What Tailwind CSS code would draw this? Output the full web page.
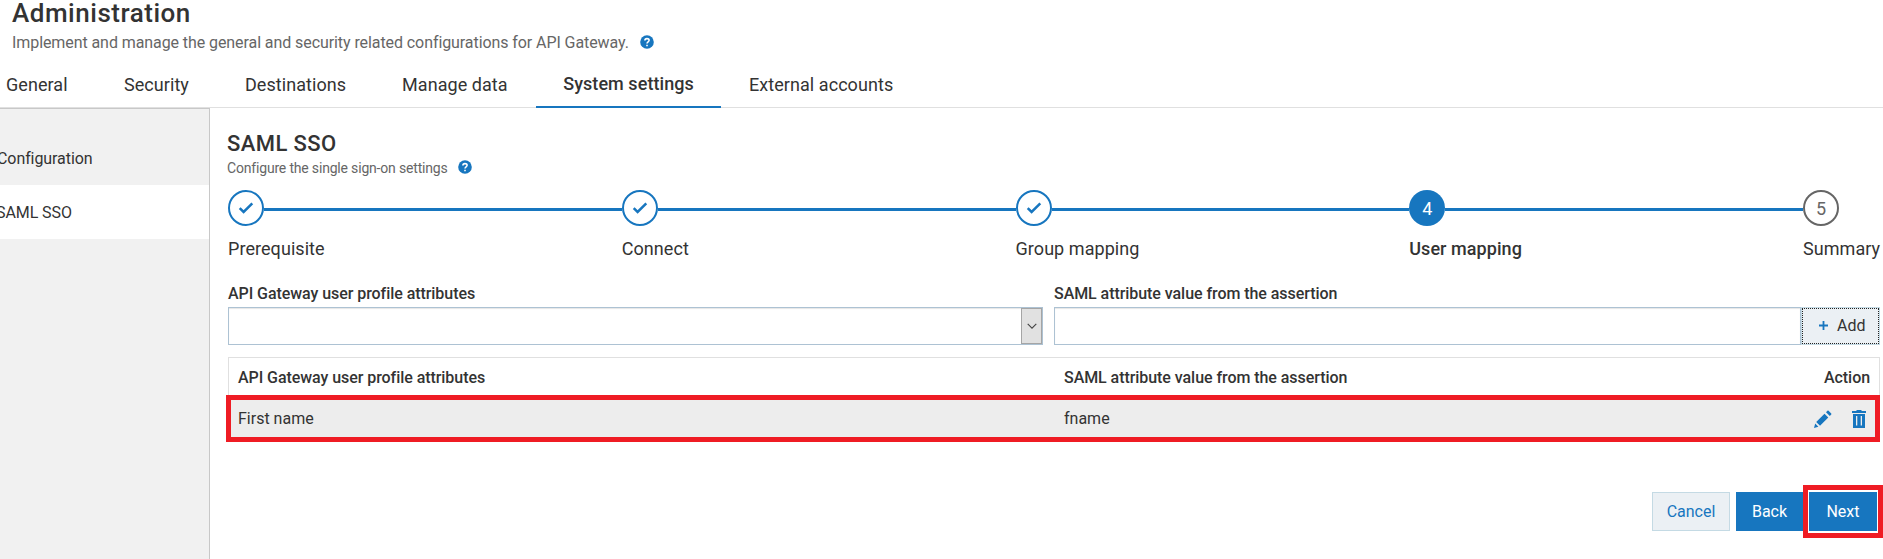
<!DOCTYPE html>
<html lang="en">
<head>
<meta charset="utf-8">
<title>Administration</title>
<script src="https://cdn.jsdelivr.net/npm/@tailwindcss/browser@4"></script>
</head>
<body class="w-[1883px] h-[559px] overflow-hidden bg-white font-['Roboto',sans-serif] text-[#333] text-base whitespace-nowrap flex flex-col">
<header class="h-[59px] shrink-0 pl-3">
  <h1 class="h-[26px] leading-[26px] text-[26px] tracking-[0.52px] font-medium">Administration</h1>
  <div class="flex items-center h-[33px] text-[#666]">
    <p class="tracking-[-0.08px]">Implement and manage the general and security related configurations for API Gateway.</p>
    <svg class="ml-[11px] -mt-[2px] size-[14px]" viewBox="0 0 14 14"><circle cx="7" cy="7" r="6.8" fill="#1776bf"/><path d="M4.9 5.4C4.9 3 9.1 3 9.1 5.3 9.1 6.8 7 6.8 7 8.5M7 9.7v1.6" fill="none" stroke="#fff" stroke-width="1.6"/></svg>
  </div>
</header>
<nav class="h-[49px] shrink-0 flex border-b border-[#e0e0e0] text-lg tracking-[0.06px] pl-[6px]">
  <a class="w-[118px] pt-1 flex items-center">General</a>
  <a class="w-[121px] pt-1 flex items-center">Security</a>
  <a class="w-[157px] pt-1 flex items-center">Destinations</a>
  <a class="w-[134px] pt-1 flex items-center">Manage data</a>
  <a class="w-[185px] h-[49px] pt-[3px] flex items-center justify-center font-medium border-b-2 border-[#1776bf]">System settings</a>
  <a class="pl-[28px] pt-1 flex items-center">External accounts</a>
</nav>
<div class="flex flex-1 min-h-0">
  <aside class="w-[210px] shrink-0 bg-[#f1f1f1] border-t border-r border-[#c8c8c8] pt-[22px] tracking-[-0.08px]">
    <a class="h-[54px] pt-px flex items-center"><span class="-ml-[3px]">Configuration</span></a>
    <a class="h-[54px] pt-px flex items-center bg-white"><span class="-ml-[4px]">SAML SSO</span></a>
  </aside>
  <main class="flex-1 min-w-0 pl-[18px] pt-[22px] flex flex-col">
    <h2 class="text-[22px] leading-[27px] tracking-[0.42px] font-medium -ml-px">SAML SSO</h2>
    <div class="flex items-center h-[22px] text-sm text-[#666] -ml-px">
      <p class="tracking-[-0.18px]">Configure the single sign-on settings</p>
      <svg class="ml-[10px] -mt-[3px] size-[14px]" viewBox="0 0 14 14"><circle cx="7" cy="7" r="6.8" fill="#1776bf"/><path d="M4.9 5.4C4.9 3 9.1 3 9.1 5.3 9.1 6.8 7 6.8 7 8.5M7 9.7v1.6" fill="none" stroke="#fff" stroke-width="1.6"/></svg>
    </div>
    <div class="mt-[11px] h-9 w-[1611px] flex items-center">
      <div class="size-9 shrink-0 rounded-full border-2 border-[#1776bf] flex items-center justify-center"><svg class="size-4" viewBox="0 0 16 16"><path d="M1.7 8.2 5.6 12 14.3 3.4" fill="none" stroke="#1776bf" stroke-width="2.5"/></svg></div>
      <div class="flex-1 h-[3px] mt-[3px] bg-[#1776bf]"></div>
      <div class="size-9 shrink-0 rounded-full border-2 border-[#1776bf] flex items-center justify-center"><svg class="size-4" viewBox="0 0 16 16"><path d="M1.7 8.2 5.6 12 14.3 3.4" fill="none" stroke="#1776bf" stroke-width="2.5"/></svg></div>
      <div class="flex-1 h-[3px] mt-[3px] bg-[#1776bf]"></div>
      <div class="size-9 shrink-0 rounded-full border-2 border-[#1776bf] flex items-center justify-center"><svg class="size-4" viewBox="0 0 16 16"><path d="M1.7 8.2 5.6 12 14.3 3.4" fill="none" stroke="#1776bf" stroke-width="2.5"/></svg></div>
      <div class="flex-1 h-[3px] mt-[3px] bg-[#1776bf]"></div>
      <div class="size-9 shrink-0 rounded-full bg-[#1776bf] text-white text-lg flex items-center justify-center pt-px">4</div>
      <div class="flex-1 h-[3px] mt-[3px] bg-[#1776bf]"></div>
      <div class="size-9 shrink-0 rounded-full border-2 border-[#666] text-[#666] text-lg flex items-center justify-center pt-px">5</div>
    </div>
    <div class="mt-[9px] flex text-lg leading-7 tracking-[0.06px]">
      <span class="w-[393.75px] shrink-0">Prerequisite</span>
      <span class="w-[393.75px] shrink-0">Connect</span>
      <span class="w-[393.75px] shrink-0">Group mapping</span>
      <span class="w-[393.75px] shrink-0 font-medium">User mapping</span>
      <span class="shrink-0">Summary</span>
    </div>
    <div class="mt-[18px] flex w-[1652px]">
      <div class="w-[815px] mr-[11px]">
        <div class="h-[26px] leading-[25px] tracking-[-0.06px] font-medium">API Gateway user profile attributes</div>
        <div class="h-[38px] border border-[#adc2d3] shadow-[inset_0_1px_1px_#e6e6e6] flex justify-end">
          <div class="w-[21px] h-full bg-[#e1e1e1] border border-[#a5a5a5] flex items-center justify-center"><svg class="size-[10px]" viewBox="0 0 10 10"><path d="M.7 2.8 5 7.1 9.3 2.8" fill="none" stroke="#444" stroke-width="1.1"/></svg></div>
        </div>
      </div>
      <div class="w-[747px]">
        <div class="h-[26px] leading-[25px] tracking-[-0.06px] font-medium">SAML attribute value from the assertion</div>
        <div class="h-[38px] border border-[#adc2d3] shadow-[inset_0_1px_1px_#e6e6e6]"></div>
      </div>
      <div class="w-[79px] h-[38px] mt-[26px] bg-[#ebf0f4] border border-[#c4dae4]">
        <div class="h-full border border-dotted border-[#222] flex items-center pl-[16px] pb-px">
          <svg class="size-[9px] mr-[9px]" viewBox="0 0 9 9"><path d="M0 4.5h9M4.5 0v9" stroke="#1776bf" stroke-width="1.8"/></svg><span>Add</span>
        </div>
      </div>
    </div>
    <div class="mt-[12px] w-[1652px] h-[38px] border border-b-0 border-[#e0e0e0] flex items-center pt-[2px] pl-[9px] pr-[9px] leading-6 tracking-[-0.06px] font-medium">
      <span class="w-[826px]">API Gateway user profile attributes</span><span class="flex-1">SAML attribute value from the assertion</span><span>Action</span>
    </div>
    <div class="-ml-[2px] w-[1654px] h-[47px] border-[5px] border-[#ef1c24] bg-[#ededed] flex items-center pt-px pl-[7px] pr-[8px]">
      <span class="w-[826px]">First name</span><span class="flex-1">fname</span>
      <svg class="w-[18px] h-[18px] mr-[20px]" viewBox="0 0 18 18" fill="#1776bf"><path d="M0 18 1.2 13.6 4.4 16.8ZM2.2 12 10.5 3.7 14.3 7.5 6 15.8ZM12 2.2 13.4.8Q14 .2 14.6.8L17.2 3.4Q17.8 4 17.2 4.6L15.8 6Z"/></svg>
      <svg class="w-[14px] h-[18px] mr-px" viewBox="0 0 14 18" fill="#1776bf"><path fill-rule="evenodd" d="M0 1H4.5V0H9.5V1H14V3H0ZM1 4H13V18H1ZM4 6V15.5H5.3V6ZM8.7 6V15.5H10V6Z"/></svg>
    </div>
    <div class="mt-[43px] flex items-start">
      <button class="ml-[1424px] mt-[7px] w-[78px] h-[39px] border border-[#c4dae4] bg-[#ebf0f4] text-[#1776bf]">Cancel</button>
      <button class="ml-[6px] mt-[7px] w-[67px] h-[39px] bg-[#1776bf] text-white">Back</button>
      <div class="w-[80px] h-[53px] border-[5px] border-[#ef1c24] px-px py-[2px] flex"><button class="w-[68px] h-[39px] bg-[#1776bf] text-white">Next</button></div>
    </div>
  </main>
</div>
</body>
</html>
